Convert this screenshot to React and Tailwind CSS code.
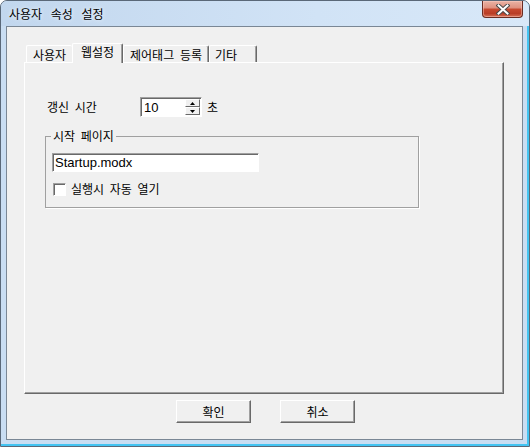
import React from "react";

const KO = "font-['Noto_Sans_CJK_KR',sans-serif]";
const LAT = "font-['Liberation_Sans','Noto_Sans_CJK_KR',sans-serif]";

function Tab({ label, active, w, left = "center", noRight }) {
  if (active) {
    return (
      <div
        className={`relative z-10 mb-[-1px] flex h-[20px] shrink-0 items-start justify-center rounded-t-[2px] border-t border-l border-white bg-[#f0f0f0] pt-[1px] ${
          noRight ? "" : "border-r border-r-[#696969] shadow-[inset_-1px_0_0_#a0a0a0]"
        }`}
        style={{ width: w }}
      >
        <span className="text-[12px] leading-[14px] [word-spacing:3px]">{label}</span>
      </div>
    );
  }
  return (
    <div
      className={`flex h-[17px] shrink-0 items-center rounded-t-[2px] border-t border-l border-white bg-[#f0f0f0] ${
        left === "center" ? "justify-center" : "justify-start pl-[5px]"
      } ${noRight ? "" : "border-r border-r-[#696969] shadow-[inset_-1px_0_0_#a0a0a0]"}`}
      style={{ width: w }}
    >
      <span className="pt-[1px] text-[12px] leading-[14px] [word-spacing:3px]">{label}</span>
    </div>
  );
}

function Button({ children }) {
  return (
    <div className="flex h-[23px] w-[75px] items-center justify-center border-t border-l border-white border-r border-b border-r-[#696969] border-b-[#696969] bg-[#f0f0f0] shadow-[inset_-1px_-1px_0_#a0a0a0]">
      <span className="text-[12px] leading-[14px]">{children}</span>
    </div>
  );
}

function SpinBtn({ up }) {
  return (
    <div className="flex h-[8px] w-full items-center justify-center border-t border-l border-white border-r border-b border-r-[#696969] border-b-[#696969] bg-[#f0f0f0]">
      <svg width="5" height="3" viewBox="0 0 5 3">
        {up ? <path d="M2.5 0 L5 3 L0 3 Z" fill="#000" /> : <path d="M0 0 L5 0 L2.5 3 Z" fill="#000" />}
      </svg>
    </div>
  );
}

export default function App() {
  return (
    <div
      className={`${KO} flex h-[447px] w-[530px] flex-col overflow-hidden rounded-t-[7px] border border-[#5a6878] bg-[#c9ddf2] text-black shadow-[inset_-2px_-2px_0_#43c4f2]`}
    >
      {/* Title bar */}
      <div className="flex h-[25px] shrink-0 items-start bg-[linear-gradient(to_right,#c2d7ee,#d1e3f6_60%,#d8e8f8)]">
        <span className="mt-[6px] pl-[8px] text-[12px] leading-[14px] [word-spacing:6px] [text-shadow:0_0_4px_#ffffff]">
          사용자 속성 설정
        </span>
        <div className="ml-auto mr-[6px] flex h-[17px] w-[41px] items-center justify-center rounded-b-[4px] border border-t-0 border-[#6a2c22] bg-[linear-gradient(to_bottom,#eab3a5_0%,#df9180_42%,#c7492f_52%,#b93e27_78%,#d56f55_100%)] shadow-[inset_0_0_0_1px_rgba(255,210,200,0.45)]">
          <svg width="14" height="11" viewBox="0 0 14 11">
            <path d="M2.5 1.5 L11.5 9.5 M11.5 1.5 L2.5 9.5" stroke="#4a4a4a" strokeWidth="4" strokeLinecap="square" />
            <path d="M2.5 1.5 L11.5 9.5 M11.5 1.5 L2.5 9.5" stroke="#ffffff" strokeWidth="2" strokeLinecap="square" />
          </svg>
        </div>
      </div>

      {/* Client area */}
      <div className="mb-[6px] ml-[5px] mr-[6px] flex flex-1 flex-col border border-[#7a8795] bg-[#f0f0f0]">
        <div className="ml-[17px] mt-[16px] w-[480px]">
          {/* Tabs */}
          <div className="flex h-[19px] items-end pl-[2px]">
            <Tab label="사용자" w={46} noRight />
            <Tab label="웹설정" w={51} active />
            <Tab label="제어태그 등록" w={86} />
            <Tab label="기타" w={48} left="start" />
          </div>
          {/* Panel */}
          <div className="flex h-[332px] flex-col border-t border-l border-white border-r border-b border-r-[#696969] border-b-[#696969] bg-[#f0f0f0] shadow-[inset_-1px_-1px_0_#a0a0a0]">
            <div className="ml-[22px] mt-[34px] flex items-center">
              <span className="w-[93px] text-[12px] leading-[14px] [word-spacing:3px]">갱신 시간</span>
              <div className="flex h-[20px] w-[62px] items-stretch border-t border-l border-[#a0a0a0] border-r border-b border-r-white border-b-white bg-white shadow-[inset_1px_1px_0_#696969]">
                <span className={`${LAT} flex-1 pl-[3px] pt-[2px] text-[13px] leading-[15px]`}>10</span>
                <div className="flex w-[16px] flex-col justify-center gap-[0px] py-[1px] pr-[1px]">
                  <SpinBtn up />
                  <SpinBtn />
                </div>
              </div>
              <span className="ml-[5px] text-[12px] leading-[14px]">초</span>
            </div>

            {/* Group box */}
            <div className="relative ml-[20px] mt-[19px] h-[72px] w-[374px] border border-[#a0a0a0] shadow-[1px_1px_0_#ffffff]">
              <span className="absolute left-[5px] top-[-8px] bg-[#f0f0f0] px-[2px] text-[12px] leading-[14px] [word-spacing:3px]">
                시작 페이지
              </span>
              <div className="ml-[6px] mt-[16px] flex h-[19px] w-[207px] items-center border-t border-l border-[#a0a0a0] border-r border-b border-r-white border-b-white bg-white shadow-[inset_1px_1px_0_#696969]">
                <span className={`${LAT} pl-[2px] text-[13px] leading-[15px]`}>Startup.modx</span>
              </div>
              <div className="ml-[7px] mt-[10px] flex items-center">
                <div className="h-[13px] w-[13px] border-t border-l border-[#a0a0a0] border-r border-b border-r-white border-b-white bg-white shadow-[inset_1px_1px_0_#696969]" />
                <span className="ml-[5px] text-[12px] leading-[14px] [word-spacing:3px]">실행시 자동 열기</span>
              </div>
            </div>
          </div>
        </div>

        {/* Buttons */}
        <div className="mt-[6px] flex justify-center gap-[29px] pl-[2px]">
          <Button>확인</Button>
          <Button>취소</Button>
        </div>
      </div>
    </div>
  );
}
